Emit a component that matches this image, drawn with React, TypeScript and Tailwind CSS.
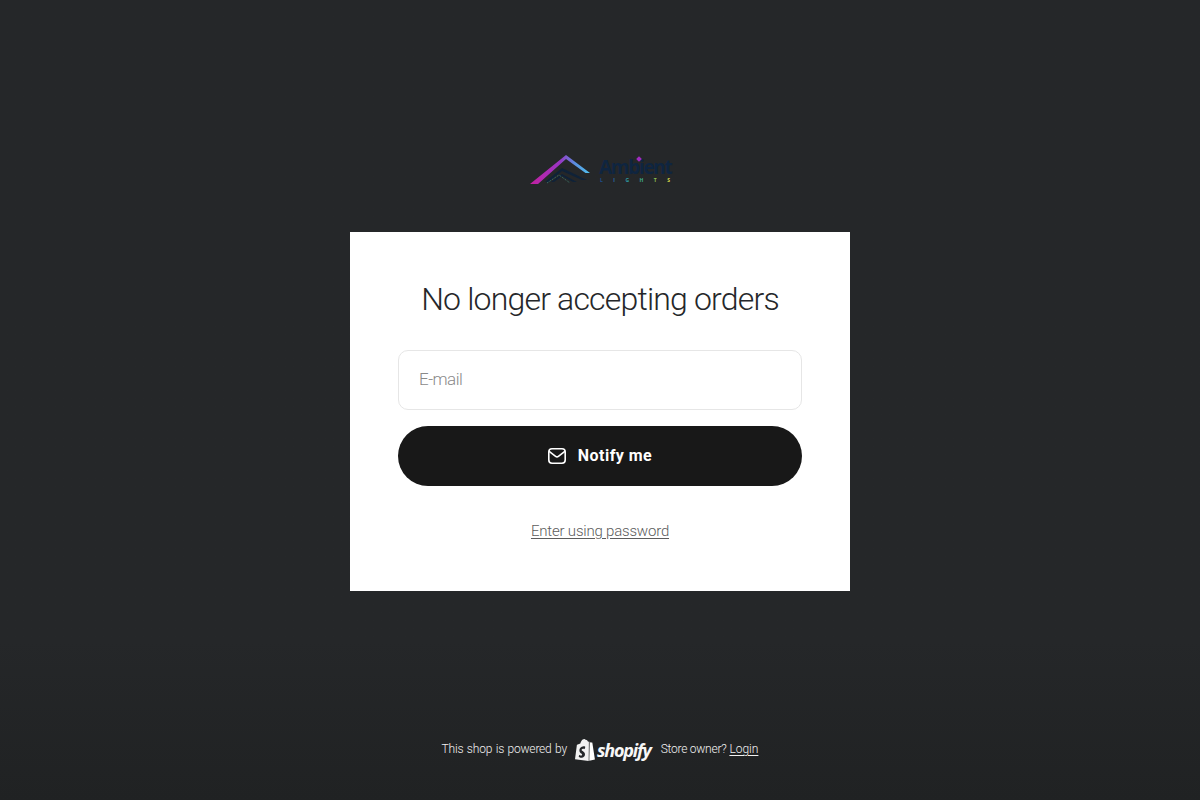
const Logo = () => {
  return (
    <div className="flex h-[30px] w-[142px] items-start">
      <svg width="62" height="30" viewBox="0 0 62 30" fill="none">
        <defs>
          <linearGradient id="roof" x1="0" y1="0" x2="1" y2="0">
            <stop offset="0" stopColor="#c2209f" />
            <stop offset="0.5" stopColor="#9a35c4" />
            <stop offset="0.75" stopColor="#5a8fe0" />
            <stop offset="1" stopColor="#4fc3f0" />
          </linearGradient>
        </defs>
        <path d="M1 29 L37 0 L61 18 L56.5 18 L37 4 L9 29 Z" fill="url(#roof)" />
        <path d="M16 27 L33 13 L58 25 L53 25 L33 16 L20 27 Z" fill="#0f2238" />
        <path d="M22 27 L33 19 L48 27 L44 27 L33 21 L25 27 Z" fill="#0f2238" />
        <path d="M18 28 L30 20 L41 28" stroke="#3f7a6c" strokeWidth="1" strokeDasharray="1 1" />
      </svg>
      <div className="ml-[8px] flex w-[72px] flex-col">
        <div className="relative mt-[5px] h-[15px] text-[19px] leading-[15px] font-bold tracking-[-1.3px] whitespace-nowrap text-[#0f2540] font-['Open_Sans',sans-serif]">
          Ambient
          <span className="absolute left-[38px] top-[-3px] h-[4px] w-[4px] rotate-45 bg-[#a02cc0]" />
        </div>
        <div className="mt-[2px] flex w-full justify-between px-[1px] text-[5px] leading-[6px] font-bold font-['Open_Sans',sans-serif]">
          <span className="text-[#1e4f8f]">L</span>
          <span className="text-[#2b6fa8]">I</span>
          <span className="text-[#2f9da8]">G</span>
          <span className="text-[#3fae8c]">H</span>
          <span className="text-[#8cc152]">T</span>
          <span className="text-[#d6d84a]">S</span>
        </div>
      </div>
    </div>
  );
};

const ShopifyMark = () => {
  return (
    <span className="flex items-center">
      <svg width="20" height="22" viewBox="0 0 21 23">
        <path
          d="M14.6 2.6 L13.7 2.9 C13.2 1.5 12.4 0.7 11.3 0.7 C11.2 0.7 11.1 0.7 11 0.7 C10.6 0.2 10.2 0 9.8 0 C7.3 0 6 3.2 5.6 4.8 L2.9 5.6 C2.1 5.9 2 5.9 1.9 6.7 L0 21.2 L14.4 23 Z"
          fill="#f2f2f2"
        />
        <path d="M15.4 2.6 L15 22.9 L21 21.6 C21 21.6 18.3 4.2 18.2 4 C18.1 3.8 18 3.8 17.9 3.7 L16.2 3.6 Z" fill="#ffffff" />
        <path
          d="M10.8 8.3 L10.1 10.6 C10.1 10.6 9.3 10.2 8.4 10.2 C7 10.3 7 11.2 7 11.4 C7.1 12.6 10.3 12.9 10.5 15.8 C10.6 18 9.3 19.5 7.4 19.7 C5.1 19.8 3.9 18.5 3.9 18.5 L4.4 16.4 C4.4 16.4 5.6 17.4 6.6 17.3 C7.3 17.3 7.5 16.8 7.5 16.4 C7.4 14.8 4.8 14.9 4.6 12.2 C4.5 10 6 7.8 9.1 7.6 C10.3 7.6 10.8 8.3 10.8 8.3 Z"
          fill="#25272a"
        />
      </svg>
      <span className="ml-[2px] text-[18px] leading-[22px] font-bold italic tracking-[-1.2px] text-[#f7f7f7] font-['Open_Sans',sans-serif]">
        shopify
      </span>
    </span>
  );
};

const MailIcon = () => {
  return (
    <svg width="18" height="16" viewBox="0 0 18 16" fill="none" stroke="currentColor" strokeWidth="1.6" strokeLinecap="round" strokeLinejoin="round">
      <rect x="0.8" y="0.8" width="16.4" height="14.4" rx="3.2" />
      <path d="M1.5 3.6 L7.6 8.4 C8.5 9.1 9.5 9.1 10.4 8.4 L16.5 3.6" />
    </svg>
  );
};

const App = () => {
  return (
    <div className="flex h-[800px] flex-col items-center overflow-hidden bg-gradient-to-b from-[#252729] from-80% to-[#202223] pt-[155px] font-['Roboto',sans-serif] font-light antialiased">
      <Logo />

      <main className="mt-[47px] flex h-[359px] w-[500px] flex-col bg-white px-[48px] pt-[48px]">
        <h1 className="text-center text-[32px] leading-[38px] font-light tracking-[-0.82px] text-[#25272a]">No longer accepting orders</h1>

        <input
          type="email"
          placeholder="E-mail"
          className="mt-[32px] h-[60px] w-full rounded-[10px] border border-[#e6e6e6] px-[20px] pb-[2px] text-[17px] font-light tracking-[-0.5px] text-[#25272a] outline-none placeholder:text-[#8a8a8a]"
        />

        <button className="mt-[16px] flex h-[60px] w-full items-center justify-center gap-[12px] rounded-full bg-[#181818] text-[16px] font-bold tracking-[0.45px] text-white">
          <MailIcon />
          Notify me
        </button>

        <a href="#" className="mt-[35px] text-center text-[15px] leading-[20px] font-light tracking-[-0.2px] text-[#5c5c5c] underline underline-offset-2">
          Enter using password
        </a>
      </main>

      <footer className="mt-auto mb-[39px] flex items-center text-[12px] leading-[23px] text-[#f2f2f2]">
        <span className="tracking-[-0.2px] [word-spacing:0.8px]">This shop is powered by</span>
        <span className="ml-[8px]">
          <ShopifyMark />
        </span>
        <span className="ml-[10px] tracking-[-0.25px]">Store owner?</span>
        <a href="#" className="ml-[3px] underline underline-offset-2">
          Login
        </a>
      </footer>
    </div>
  );
};

export default App;
